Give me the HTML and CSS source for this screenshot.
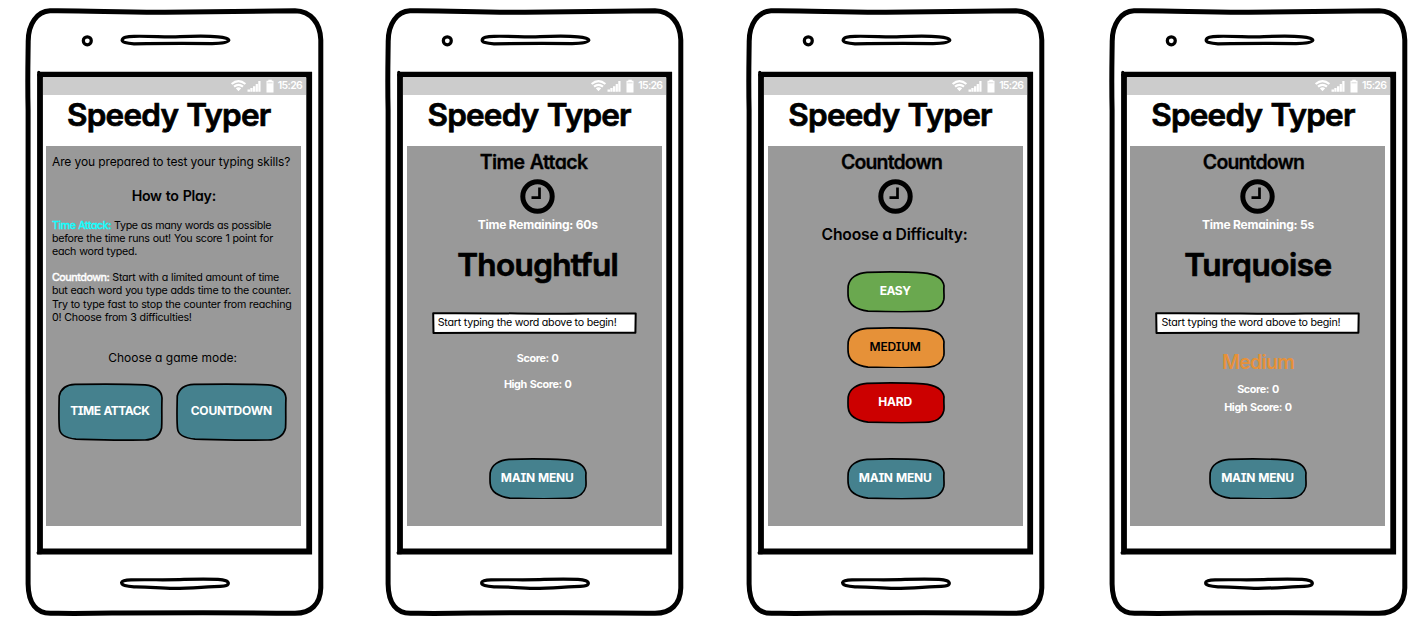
FILE: index.html
```html
<!DOCTYPE html>
<html lang="en">
<head>
<meta charset="utf-8">
<title>Speedy Typer</title>
<link rel="stylesheet" href="styles.css">
</head>
<body>
<svg class="defs" aria-hidden="true">
  <symbol id="frame" viewBox="24 6 302 612">
    <g fill="none" stroke="#000" stroke-linecap="round" stroke-linejoin="round">
      <path stroke-width="5" d="M50 10.800C90 10.400 118 12.600 165 12.300C215 11.500 260 10.800 295 10.800C311 11.400 320.300 23 320.800 40C321.200 200 320.400 420 320.800 588C320.300 604 311 613.300 295 613.300C240 612.400 160 612.800 112 613C85 613.600 70 613.400 52 613.300C36 614 28.300 603 28.100 584C27.600 430 28.400 250 28.100 110C27.400 80 28 60 28.200 42C28 24 37 11.400 50 10.800Z"/>
      <path stroke-width="5.800" stroke-linecap="butt" stroke-linejoin="miter" d="M37.500 74.600H309.200V551.500H40V74"/>
      <path stroke-width="3" d="M38.800 72.300V75M38 552.700H41"/>
      <circle cx="87.300" cy="40.800" r="4" stroke-width="3.200"/>
      <path stroke-width="3.200" d="M134 36.300C155 36 164 37.300 180 36.600C198 35.900 210 36 218 36.800C225 37.400 229 39 228.800 40.300C228 42.600 222 43.500 212 43.600C182 43 156 43.400 134 43.800C126 43.400 122 42 122.200 40.300C122 37.500 127 36.300 134 36.300Z"/>
      <path stroke-width="3.200" d="M131 579.800C155 579.500 168 580.200 184 579.400C198 579 210 579 218 579.400C225 579.600 228.500 581.500 228.300 583.500C228 586 223 586.500 214 586.600C198 587.400 189 588.200 174 588.400C158 588.200 150 586.600 134 586.800C126 586.300 121.500 585 121.700 583C121.500 581 125 580 131 579.800Z"/>
    </g>
  </symbol>
  <symbol id="blob" viewBox="0 0 98 42" preserveAspectRatio="none">
    <path vector-effect="non-scaling-stroke" stroke="#000" stroke-width="1.700" d="M20 1.300C40 .8 62 1 76 1.800C89 3 96 8 97 15C96.500 22 97.500 25 96.800 29C95 37 88 40.700 78 40.900C60 41.600 36 41.200 21 40.600C9 39 2 34 1.200 26C.8 22 1 19 1.200 15C2.500 7 10 2 20 1.300Z"/>
  </symbol>
  <symbol id="blob-lg" viewBox="0 0 105 58" preserveAspectRatio="none">
    <path vector-effect="non-scaling-stroke" stroke="#000" stroke-width="1.700" d="M17 1.300C45 1 68 .8 87 1.800C98 3 103.500 8 104 15C103.500 28 104.200 36 103.600 45C102 53 95 57 87 57C60 57.500 38 56.500 18 56.200C8 55 2 51 1.500 46C.5 38 1 26 1.200 13C3 5 9 1.600 17 1.300Z"/>
  </symbol>
  <symbol id="box" viewBox="0 0 205 22">
    <path fill="#fff" stroke="#000" stroke-width="2" stroke-linejoin="round" d="M1.200 1.200C70 .8 110 2.200 150 1.500L203.700 1.600L203.400 20.800C130 20.400 90 21.200 60 20.700L1.500 20.900Z"/>
  </symbol>
  <symbol id="clock" viewBox="0 0 35 35">
    <g fill="none" stroke="#000"><circle cx="17.500" cy="17.500" r="14.700" stroke-width="5"/><path stroke-width="2.700" d="M19.500 8.500V18.700H11.500"/></g>
  </symbol>
  <symbol id="signals" viewBox="0 0 45 14">
    <g fill="none" stroke="#fff" stroke-width="2.200"><path d="M1.600 5Q8.500-.6 15.400 5"/><path d="M4 7.700Q8.500 4 13 7.700"/></g>
    <path fill="#fff" d="M5.800 9.200Q8.500 7.200 11.200 9.200L8.500 12.300ZM17.500 10.500h2.500v2.300h-2.500zM20.300 9h2.300v3.800h-2.300zM23 7.200h2.300v5.600h-2.300zM25.700 5h2.200v7.800h-2.200zM28.300 2h2.200v10.800h-2.200zM38.300.8h3.500v1h1.700v11.700h-7V1.800h1.800z"/>
    <path stroke="#ccc" stroke-width=".7" d="M37.500 3.800h5"/>
  </symbol>
</svg>

<main class="phones">
  <section class="phone">
    <svg class="frame"><use href="#frame"/></svg>
    <div class="screen">
      <div class="status"><svg class="signals"><use href="#signals"/></svg><span>15:26</span></div>
      <h1 class="title">Speedy Typer</h1>
      <div class="panel intro">
        <p class="lead">Are you prepared to test your typing skills?</p>
        <h2 class="how">How to Play:</h2>
        <div class="rules">
          <p><b class="cyan">Time Attack:</b> <span class="tight">Type as many words as possible</span><br>before the time runs out! You score 1 point for<br>each word typed.</p>
          <p><b class="white">Countdown:</b> Start with a limited amount of time<br>but each word you type adds time to the counter.<br>Try to type fast to stop the counter from reaching<br>0! Choose from 3 difficulties!</p>
        </div>
        <p class="choose-mode">Choose a game mode:</p>
        <div class="modes">
          <button class="btn mode mode-time"><svg class="shape"><use href="#blob-lg"/></svg><span>TIME ATTACK</span></button>
          <button class="btn mode mode-count"><svg class="shape"><use href="#blob-lg"/></svg><span>COUNTDOWN</span></button>
        </div>
      </div>
    </div>
  </section>

  <section class="phone">
    <svg class="frame"><use href="#frame"/></svg>
    <div class="screen">
      <div class="status"><svg class="signals"><use href="#signals"/></svg><span>15:26</span></div>
      <h1 class="title">Speedy Typer</h1>
      <div class="panel game attack">
        <h2 class="mode-name mode-attack">Time Attack</h2>
        <svg class="clock"><use href="#clock"/></svg>
        <p class="time">Time Remaining: 60s</p>
        <p class="word">Thoughtful</p>
        <div class="entry"><svg class="shape"><use href="#box"/></svg><span>Start typing the word above to begin!</span></div>
        <div class="scores wide"><p>Score: 0</p><p>High Score: 0</p></div>
        <button class="btn menu"><svg class="shape"><use href="#blob"/></svg><span>MAIN MENU</span></button>
      </div>
    </div>
  </section>

  <section class="phone">
    <svg class="frame"><use href="#frame"/></svg>
    <div class="screen">
      <div class="status"><svg class="signals"><use href="#signals"/></svg><span>15:26</span></div>
      <h1 class="title">Speedy Typer</h1>
      <div class="panel game difficulty">
        <h2 class="mode-name mode-countdown">Countdown</h2>
        <svg class="clock"><use href="#clock"/></svg>
        <p class="choose-level">Choose a Difficulty:</p>
        <div class="levels">
          <button class="btn easy"><svg class="shape"><use href="#blob"/></svg><span>EASY</span></button>
          <button class="btn medium"><svg class="shape"><use href="#blob"/></svg><span>MEDIUM</span></button>
          <button class="btn hard"><svg class="shape"><use href="#blob"/></svg><span>HARD</span></button>
        </div>
        <button class="btn menu"><svg class="shape"><use href="#blob"/></svg><span>MAIN MENU</span></button>
      </div>
    </div>
  </section>

  <section class="phone">
    <svg class="frame"><use href="#frame"/></svg>
    <div class="screen">
      <div class="status"><svg class="signals"><use href="#signals"/></svg><span>15:26</span></div>
      <h1 class="title">Speedy Typer</h1>
      <div class="panel game countdown">
        <h2 class="mode-name mode-countdown">Countdown</h2>
        <svg class="clock"><use href="#clock"/></svg>
        <p class="time">Time Remaining: 5s</p>
        <p class="word turquoise">Turquoise</p>
        <div class="entry"><svg class="shape"><use href="#box"/></svg><span>Start typing the word above to begin!</span></div>
        <p class="level-name">Medium</p>
        <div class="scores"><p>Score: 0</p><p>High Score: 0</p></div>
        <button class="btn menu"><svg class="shape"><use href="#blob"/></svg><span>MAIN MENU</span></button>
      </div>
    </div>
  </section>
</main>
</body>
</html>
```
FILE: styles.css
```css
* { box-sizing: border-box; }
body {
  margin: 0;
  background: #fff;
  color: #000;
  font-family: Inter, "Liberation Sans", sans-serif;
  font-feature-settings: "cv11";
  overflow: hidden;
}
h1, h2, p { margin: 0; font-weight: 600; white-space: nowrap; }
.defs { position: absolute; width: 0; height: 0; }

.phones {
  display: grid;
  grid-template-columns: 360.4px 360.9px 362.9px 302px;
  padding: 6px 0 0 24px;
}
.phone { position: relative; width: 302px; height: 612px; padding: 71px 0 0 18.500px; }
.frame { position: absolute; left: 0; top: 0; width: 302px; height: 612px; }
.screen { position: relative; width: 263.500px; }

.status {
  display: flex;
  align-items: center;
  justify-content: flex-end;
  gap: 3px;
  height: 17.500px;
  padding-right: 4px;
  background: #ccc;
  color: #fff;
  font-size: 10.500px;
  font-weight: 600;
  letter-spacing: -.700px;
}
.signals { width: 45px; height: 14px; }
.title {
  height: 51.500px;
  padding-right: 11px;
  text-align: center;
  font-size: 31.500px;
  line-height: 39.500px;
  letter-spacing: -.800px;
  word-spacing: 1px;
  -webkit-text-stroke: .7px #000;
}
.panel { width: 255px; height: 380px; margin-left: 3.800px; background: #999; }

.lead { height: 31px; padding-left: 5.700px; font-size: 12px; font-weight: 400; line-height: 31px; letter-spacing: -.110px; }
.how { height: 38px; text-align: center; font-size: 14.200px; line-height: 38px; letter-spacing: -.300px; word-spacing: .8px; }
.rules { padding: 4px 0 0 5.700px; font-size: 10.700px; line-height: 13.100px; letter-spacing: -.260px; word-spacing: .3px; }
.rules p { font-weight: 400; margin-bottom: 13.100px; }
.rules b { font-weight: 500; letter-spacing: -.480px; -webkit-text-stroke: .3px; }
.tight { letter-spacing: -.340px; }
.cyan { color: #1ff; }
.white { color: #fff; }
.choose-mode { padding-top: 10.300px; height: 32.300px; padding-right: 2.500px; text-align: center; font-size: 12px; font-weight: 400; line-height: 22px; }
.modes { display: flex; gap: 13.500px; margin: 13.800px 0 0 11.500px; }

.btn {
  position: relative;
  display: flex;
  align-items: center;
  justify-content: center;
  width: 98px;
  height: 41.500px;
  padding: 0 1px 2px 0;
  border: 0;
  background: none;
  color: #fff;
  font: 700 12px Inter, "Liberation Sans", sans-serif;
  font-feature-settings: "cv11", "cv08";
  letter-spacing: -.240px;
  word-spacing: .6px;
}
.btn span, .entry span { position: relative; }
.shape { position: absolute; left: 0; top: 0; width: 100%; height: 100%; fill: #45818e; }
.mode { height: 58px; }
.mode-time { width: 105px; letter-spacing: -.500px; }
.mode-count { width: 111px; padding-right: 1px; }
.easy .shape { fill: #6aa84f; }
.easy { letter-spacing: -.500px; }
.medium .shape { fill: #e69138; }
.medium { color: #000; font-weight: 600; }
.hard .shape { fill: #c00; }

.game { display: flex; flex-direction: column; align-items: center; padding-left: 7px; }
.difficulty { padding-left: 1px; }
.countdown { padding-left: 0; }
.mode-name { height: 30.500px; padding-top: 1px; font-size: 19.500px; line-height: 30.500px; -webkit-text-stroke: .3px #000; }
.mode-attack { margin-right: 8px; letter-spacing: -.600px; word-spacing: 1px; }
.mode-countdown { margin-right: 8px; letter-spacing: -.850px; }
.countdown .mode-countdown { margin-right: 9px; }
.clock { width: 35px; height: 35px; margin-top: 2.500px; }
.time { height: 21px; color: #fff; font-size: 12px; font-weight: 700; line-height: 21px; letter-spacing: -.220px; }
.word { height: 60px; font-size: 31.500px; line-height: 60px; letter-spacing: -.650px; -webkit-text-stroke: .7px #000; }
.turquoise { letter-spacing: -.500px; }
.entry { position: relative; width: 205px; height: 22px; margin-top: 17px; padding-left: 6px; font-size: 10.700px; line-height: 21.500px; letter-spacing: -.250px; }
.attack .entry { left: -3.500px; }
.scores { color: #fff; font-size: 10.800px; line-height: 18px; letter-spacing: -.400px; word-spacing: .8px; text-align: center; }
.scores p { position: relative; top: 1px; font-weight: 700; }
.wide { margin-top: 10.500px; line-height: 26px; }
.attack .menu { margin-top: 61px; }

.choose-level { height: 41px; font-size: 15.700px; padding-right: 2px; line-height: 41px; letter-spacing: -.210px; }
.levels { display: grid; gap: 14px; margin-top: 16px; }
.difficulty .menu { margin-top: 34.500px; }

.level-name { height: 36.500px; margin-top: 9.500px; color: #e69138; font-size: 19.500px; line-height: 36.500px; letter-spacing: -.700px; }
.countdown .menu { margin-top: 41.500px; }
```
